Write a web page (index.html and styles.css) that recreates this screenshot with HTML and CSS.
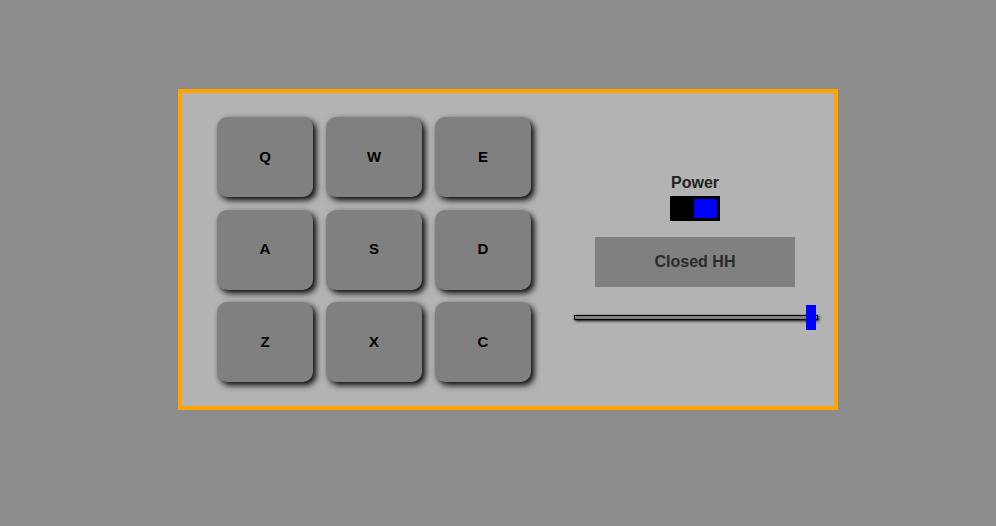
FILE: index.html
```html
<!DOCTYPE html>
<html>
<head>
<meta charset="utf-8">
<link rel="stylesheet" href="styles.css">
</head>
<body>
<div class="wrap">
  <div class="machine">
    <div class="pads">
      <div class="pad">Q</div>
      <div class="pad">W</div>
      <div class="pad">E</div>
      <div class="pad">A</div>
      <div class="pad">S</div>
      <div class="pad">D</div>
      <div class="pad">Z</div>
      <div class="pad">X</div>
      <div class="pad">C</div>
    </div>
    <div class="controls">
      <div class="label">Power</div>
      <div class="toggle"><div class="knob"></div></div>
      <div class="display">Closed HH</div>
      <div class="slider">
        <div class="track"></div>
        <div class="thumb"></div>
      </div>
    </div>
  </div>
</div>
</body>
</html>
```
FILE: styles.css
```css
html, body {
  margin: 0;
  padding: 0;
  background: #8c8c8c;
  font-family: "Liberation Sans", Arial, sans-serif;
}
.wrap {
  padding: 89px 0 0 178px;
}
.machine {
  width: 652px;
  height: 313px;
  border: 4px solid #ffa500;
  background: #b3b3b3;
  display: flex;
}
.pads {
  display: grid;
  grid-template-columns: repeat(3, 96px);
  grid-template-rows: 80px 80px 80px;
  column-gap: 13px;
  row-gap: 12.5px;
  padding: 24px 0 0 35px;
}
.pad {
  background: #808080;
  border-radius: 10px;
  box-shadow: 3px 3px 6px #000;
  display: flex;
  align-items: center;
  justify-content: center;
  padding-bottom: 2px;
  box-sizing: border-box;
  font-weight: bold;
  font-size: 15px;
  color: #000;
}
.controls {
  display: flex;
  flex-direction: column;
  align-items: center;
  width: 250px;
  margin-left: 39px;
  padding-top: 81px;
}
.label {
  font-size: 16px;
  line-height: 18px;
  font-weight: bold;
  color: #222;
}
.toggle {
  margin-top: 4px;
  width: 50px;
  height: 25px;
  background: #000;
  display: flex;
  justify-content: flex-end;
  align-items: center;
  box-sizing: border-box;
  padding: 3px;
}
.knob {
  width: 23px;
  height: 19px;
  background: #0000ff;
}
.display {
  margin-top: 16px;
  width: 200px;
  height: 50px;
  background: #808080;
  display: flex;
  align-items: center;
  justify-content: center;
  font-weight: bold;
  font-size: 16px;
  color: #2b2b2b;
}
.slider {
  margin-top: 18px;
  margin-left: 2px;
  width: 244px;
  height: 25px;
  position: relative;
  display: flex;
  align-items: center;
}
.track {
  width: 100%;
  height: 5px;
  box-sizing: border-box;
  border: 1px solid #000;
  background: #808080;
  box-shadow: 1px 1px 3px #000;
}
.thumb {
  position: absolute;
  left: 232px;
  top: 0;
  width: 10px;
  height: 25px;
  background: #0000ff;
}
```
